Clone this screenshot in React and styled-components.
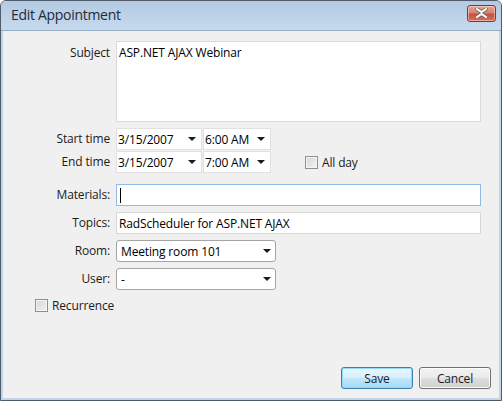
import React from "react";
import styled, { createGlobalStyle } from "styled-components";

const GlobalStyle = createGlobalStyle`
    html, body {
        margin: 0;
        padding: 0;
        background: #ffffff;
    }
    body {
        font-family: "Open Sans", "Noto Sans", sans-serif;
        font-size: 12px;
        letter-spacing: -0.15px;
        color: #1b1b1b;
    }
`;

const Window = styled.div`
    width: 502px;
    height: 401px;
    box-sizing: border-box;
    border: 1px solid #4f5b68;
    border-radius: 6px 6px 0 0;
    background: #c0d4ea;
    display: flex;
    flex-direction: column;
    overflow: hidden;
`;

const TitleBar = styled.div`
    height: 29px;
    display: flex;
    align-items: center;
    justify-content: space-between;
    padding: 0 5px 0 10px;
    background: linear-gradient(#b3cae3, #c6daee);
    border-bottom: 1px solid #97abc0;
    .title {
        font-size: 14px;
        color: #1e2a38;
        letter-spacing: -0.3px;
        margin-top: -2px;
    }
`;

const CloseButton = styled.div`
    width: 29px;
    height: 17px;
    box-sizing: border-box;
    margin-top: -5px;
    border: 1px solid #7b3b33;
    border-radius: 3px;
    background: linear-gradient(#e9a597 0%, #d9806f 45%, #c5503f 55%, #d2725f 100%);
    box-shadow: inset 0 0 0 1px rgba(255, 220, 210, 0.55);
    display: flex;
    align-items: center;
    justify-content: center;
    svg {
        display: block;
    }
`;

const Body = styled.div`
    flex: 1;
    margin: 0 2px 2px 2px;
    background: #f0f0f0;
    display: flex;
    flex-direction: column;
    padding: 10px 18px 9px 0;
`;

const Row = styled.div`
    display: grid;
    grid-template-columns: 107px 1fr;
    column-gap: 6px;
    align-items: ${(p) => (p.$top ? "start" : "center")};
    margin-top: ${(p) => p.$mt || 0}px;
`;

const Label = styled.div`
    text-align: right;
    line-height: 16px;
    padding-top: ${(p) => (p.$top ? 4 : 0)}px;
`;

const TextArea = styled.div`
    height: 81px;
    box-sizing: border-box;
    background: #fff;
    border: 1px solid #dadada;
    padding: 3px 2px;
    line-height: 16px;
    color: #000;
`;

const TextBox = styled.div`
    height: 22px;
    box-sizing: border-box;
    background: #fff;
    border: 1px solid ${(p) => (p.$focus ? "#8fbbe6" : "#d7d7d7")};
    padding: 0 2px;
    display: flex;
    align-items: center;
    color: #000;
`;

const Caret = styled.span`
    display: inline-block;
    width: 1px;
    height: 15px;
    background: #000;
    margin-left: 1px;
`;

const Fields = styled.div`
    display: flex;
    align-items: center;
    gap: 1px;
`;

const Picker = styled.div`
    width: ${(p) => p.$w}px;
    height: 22px;
    box-sizing: border-box;
    background: #fff;
    border: 1px solid #e1e1e1;
    display: flex;
    align-items: center;
    justify-content: space-between;
    padding: 0 5px 0 1px;
    color: #000;
`;

const Arrow = styled.span`
    width: 0;
    height: 0;
    border-left: 4px solid transparent;
    border-right: 4px solid transparent;
    border-top: 4px solid #1a1a1a;
`;

const Select = styled.div`
    width: 160px;
    height: 22px;
    box-sizing: border-box;
    background: #fff;
    border: 1px solid #a5a5a5;
    border-radius: 3px;
    display: flex;
    align-items: center;
    justify-content: space-between;
    padding: 0 4px 0 4px;
    color: #000;
`;

const Check = styled.label`
    display: flex;
    align-items: center;
    gap: 4px;
    margin-left: ${(p) => p.$ml || 0}px;
    margin-top: ${(p) => p.$mt || 0}px;
    .box {
        width: 13px;
        height: 13px;
        box-sizing: border-box;
        border: 1px solid #8e8f8f;
        background: linear-gradient(135deg, #d4d4d4, #f4f4f4);
        box-shadow: inset 0 0 0 1px #f5f5f5;
    }
`;

const Footer = styled.div`
    margin-top: auto;
    display: flex;
    justify-content: flex-end;
    gap: 6px;
    margin-right: -10px;
`;

const Button = styled.div`
    width: 72px;
    height: 22px;
    box-sizing: border-box;
    border-radius: 3px;
    display: flex;
    align-items: center;
    justify-content: center;
    color: #1b1b1b;
    border: 1px solid ${(p) => (p.$primary ? "#3c7fb1" : "#707070")};
    background: ${(p) =>
        p.$primary
            ? "linear-gradient(#eaf6fd 0%, #d9f0fc 45%, #bee6fd 55%, #a7d9f5 100%)"
            : "linear-gradient(#f2f2f2 0%, #ebebeb 45%, #dddddd 55%, #cfcfcf 100%)"};
    box-shadow: inset 0 0 0 1px ${(p) => (p.$primary ? "#96d8f5" : "#fcfcfc")};
`;

const CloseIcon = () => (
    <svg width="13" height="10" viewBox="0 0 13 10">
        <path
            d="M2 1 L6.5 4 L11 1 M2 9 L6.5 6 L11 9"
            stroke="#6a6a6a"
            strokeWidth="3.6"
            fill="none"
            strokeLinecap="square"
        />
        <path
            d="M2 1 L6.5 4 L11 1 M2 9 L6.5 6 L11 9"
            stroke="#ffffff"
            strokeWidth="2"
            fill="none"
            strokeLinecap="square"
        />
    </svg>
);

const DateTime = ({ date, time }) => (
    <Fields>
        <Picker $w={86}>
            {date}
            <Arrow />
        </Picker>
        <Picker $w={68}>
            {time}
            <Arrow />
        </Picker>
    </Fields>
);

const App = () => {
    return (
        <>
            <GlobalStyle />
            <Window>
                <TitleBar>
                    <span className="title">Edit Appointment</span>
                    <CloseButton>
                        <CloseIcon />
                    </CloseButton>
                </TitleBar>
                <Body>
                    <Row $top>
                        <Label $top>Subject</Label>
                        <TextArea>ASP.NET AJAX Webinar</TextArea>
                    </Row>
                    <Row $mt={6}>
                        <Label>Start time</Label>
                        <DateTime date="3/15/2007" time="6:00 AM" />
                    </Row>
                    <Row $mt={1}>
                        <Label>End time</Label>
                        <Fields>
                            <DateTime date="3/15/2007" time="7:00 AM" />
                            <Check $ml={33}>
                                <span className="box" />
                                All day
                            </Check>
                        </Fields>
                    </Row>
                    <Row $mt={11}>
                        <Label>Materials:</Label>
                        <TextBox $focus>
                            <Caret />
                        </TextBox>
                    </Row>
                    <Row $mt={6}>
                        <Label>Topics:</Label>
                        <TextBox>RadScheduler for ASP.NET AJAX</TextBox>
                    </Row>
                    <Row $mt={6}>
                        <Label>Room:</Label>
                        <Select>
                            Meeting room 101
                            <Arrow />
                        </Select>
                    </Row>
                    <Row $mt={6}>
                        <Label>User:</Label>
                        <Select>
                            -
                            <Arrow />
                        </Select>
                    </Row>
                    <Check $ml={32} $mt={7}>
                        <span className="box" />
                        Recurrence
                    </Check>
                    <Footer>
                        <Button $primary>Save</Button>
                        <Button>Cancel</Button>
                    </Footer>
                </Body>
            </Window>
        </>
    );
};

export default App;
